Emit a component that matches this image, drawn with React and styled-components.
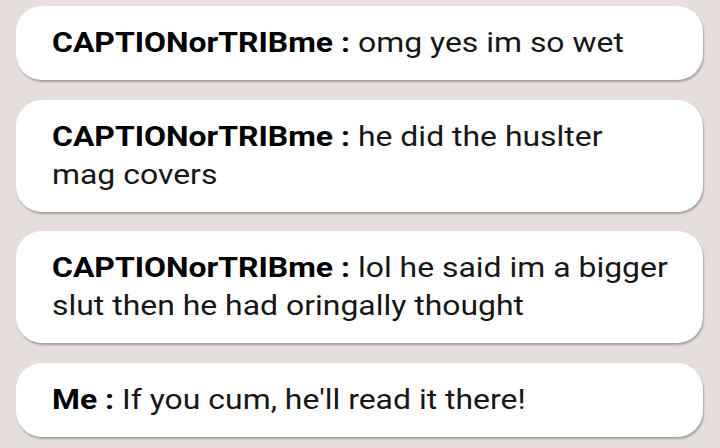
import React from "react";
import styled, { createGlobalStyle } from "styled-components";

const GlobalStyle = createGlobalStyle`
  html, body {
    margin: 0;
    padding: 0;
    background: #e6dedd;
  }
  body {
    font-family: Roboto, "Noto Sans", "Liberation Sans", sans-serif;
  }
`;

const ChatList = styled.div`
  display: flex;
  flex-direction: column;
  gap: 19.5px;
  padding: 6px 17px 0 16px;
  width: 720px;
  height: 448px;
  box-sizing: border-box;
  overflow: hidden;
`;

const Bubble = styled.div`
  background: #ffffff;
  border-radius: 26px;
  padding: 18px 36px;
  box-shadow: 1px 2px 2px rgba(0, 0, 0, 0.28);
`;

const Text = styled.div`
  font-size: 28px;
  line-height: 38px;
  color: #161616;
  white-space: nowrap;
  transform: scaleX(1.14);
  transform-origin: left center;
`;

const Sender = styled.span`
  font-weight: 700;
  color: #000000;
`;

const messages = [
  { from: "CAPTIONorTRIBme", lines: ["omg yes im so wet"] },
  { from: "CAPTIONorTRIBme", lines: ["he did the huslter", "mag covers"] },
  {
    from: "CAPTIONorTRIBme",
    lines: ["lol he said im a bigger", "slut then he had oringally thought"],
  },
  { from: "Me", lines: ["If you cum, he'll read it there!"] },
];

export default function App() {
  return (
    <>
      <GlobalStyle />
      <ChatList>
        {messages.map((m, i) => (
          <Bubble key={i}>
            <Text>
              <Sender>{m.from} :</Sender>{" "}
              {m.lines.map((l, j) => (
                <React.Fragment key={j}>
                  {j > 0 && <br />}
                  {l}
                </React.Fragment>
              ))}
            </Text>
          </Bubble>
        ))}
      </ChatList>
    </>
  );
}
